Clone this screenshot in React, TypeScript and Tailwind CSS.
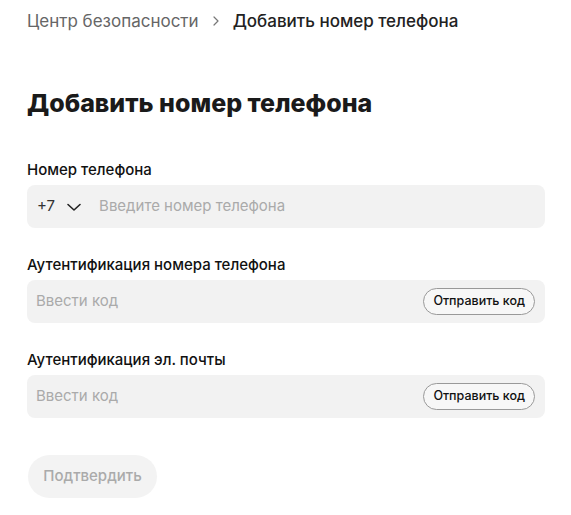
import React from "react";

function Chevron() {
  return (
    <svg width="16" height="16" viewBox="0 0 16 16" fill="none" className="ml-[11px] mr-[17px]">
      <path d="M2 5.5l6 5.5 6-5.5" stroke="#222" strokeWidth="1.6" strokeLinecap="round" strokeLinejoin="round" />
    </svg>
  );
}

function CodeField({ label }: { label: string }) {
  return (
    <div className="flex flex-col">
      <div className="text-[15px] font-medium text-[#111] leading-[20px] mb-[5px]">{label}</div>
      <div className="h-[43px] rounded-[8px] bg-[#f2f2f2] flex items-center pl-[9px] pr-[10px]">
        <span className="text-[15px] text-[#aaa] flex-1">Ввести код</span>
        <button className="h-[27px] px-[9px] rounded-full border border-[#999] bg-[#f7f7f7] text-[12.5px] font-medium text-[#111]">
          Отправить код
        </button>
      </div>
    </div>
  );
}

export default function App() {
  return (
    <div className="w-[571px] h-[515px] bg-white pl-[27px] pr-[26px] pt-[10px]" style={{ fontFamily: "Inter, 'Noto Sans', sans-serif" }}>
      <div className="flex items-center text-[17px] leading-[22px]">
        <span className="text-[#666]">Центр безопасности</span>
        <svg width="12" height="12" viewBox="0 0 12 12" fill="none" className="ml-[11px] mr-[11px]">
          <path d="M4 2l4 4-4 4" stroke="#777" strokeWidth="1.2" strokeLinecap="round" strokeLinejoin="round" />
        </svg>
        <span className="text-[#222] font-medium">Добавить номер телефона</span>
      </div>
      <h1 className="mt-[55px] text-[25px] leading-[32px] font-extrabold text-[#1a1a1a]">Добавить номер телефона</h1>
      <div className="mt-[41px] flex flex-col gap-[27px]">
        <div className="flex flex-col">
          <div className="text-[15px] font-medium text-[#111] leading-[20px] mb-[5px]">Номер телефона</div>
          <div className="h-[43px] rounded-[8px] bg-[#f2f2f2] flex items-center pl-[10px]">
            <span className="text-[15px] text-[#333]">+7</span>
            <Chevron />
            <span className="text-[15px] text-[#aaa]">Введите номер телефона</span>
          </div>
        </div>
        <CodeField label="Аутентификация номера телефона" />
        <CodeField label="Аутентификация эл. почты" />
      </div>
      <button className="mt-[37px] h-[43px] w-[129px] ml-[1px] rounded-full bg-[#f3f3f3] text-[15px] font-medium text-[#aaa]">
        Подтвердить
      </button>
    </div>
  );
}
